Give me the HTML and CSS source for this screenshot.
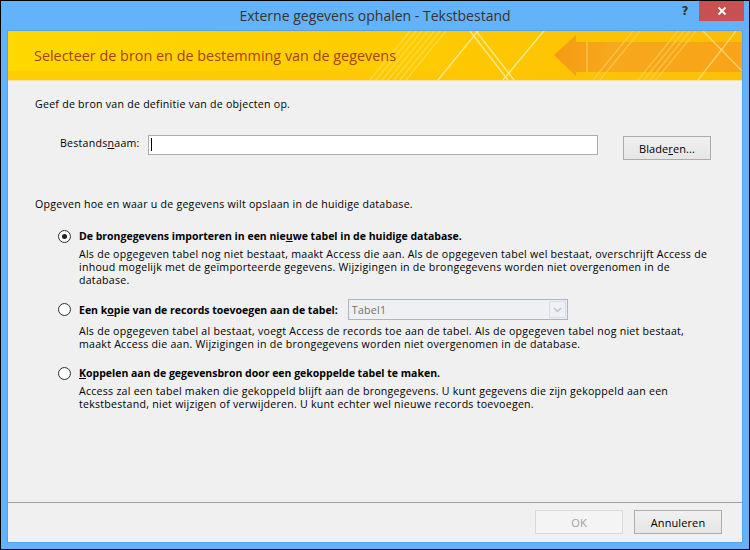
FILE: index.html
```html
<!DOCTYPE html>
<html lang="nl">
<head>
<meta charset="UTF-8" />
<title>Externe gegevens ophalen - Tekstbestand</title>
<link rel="stylesheet" href="styles.css">
</head>
<body>
<div class="window">
  <div class="titlebar">
    <span></span>
    <span class="title">Externe gegevens ophalen - Tekstbestand</span>
    <div class="caption-btns">
      <span class="help">?</span>
      <span class="close">
        <svg width="10" height="10" viewBox="0 0 10 10"><path d="M1.5 1.5 L8.5 8.5 M8.5 1.5 L1.5 8.5" stroke="#fff" stroke-width="1.8" /></svg>
      </span>
    </div>
  </div>

  <div class="client">
    <div class="banner">
      <svg class="banner-art" width="734" height="49" viewBox="0 0 734 49">
        <defs>
          <linearGradient id="bg" x1="0" y1="0" x2="1" y2="0">
            <stop offset="0" stop-color="#ffd800" />
            <stop offset="0.55" stop-color="#fecb00" />
            <stop offset="1" stop-color="#fbbc08" />
          </linearGradient>
          <linearGradient id="arrow" x1="0" y1="0" x2="1" y2="0">
            <stop offset="0" stop-color="#f59a12" />
            <stop offset="0.3" stop-color="#f7a81c" />
            <stop offset="1" stop-color="#f8a416" />
          </linearGradient>
        </defs>
        <rect width="734" height="49" fill="url(#bg)" />
        <rect y="40" width="734" height="9" fill="#fdc406" opacity="0.5" />
        <g stroke="#ffe97a" stroke-width="1.2" opacity="0.55">
          <line x1="362" y1="49" x2="402" y2="0" />
          <line x1="368" y1="49" x2="408" y2="0" />
          <line x1="374" y1="49" x2="414" y2="0" />
          <line x1="380" y1="49" x2="420" y2="0" />
          <line x1="386" y1="49" x2="426" y2="0" />
          <line x1="392" y1="49" x2="432" y2="0" />
          <line x1="398" y1="49" x2="438" y2="0" />
        </g>
        <g stroke="#fff3b0" stroke-width="1.5" opacity="0.75">
          <line x1="462" y1="0" x2="500" y2="49" />
          <line x1="468" y1="0" x2="506" y2="49" />
          <line x1="495" y1="49" x2="540" y2="-5" />
          <line x1="430" y1="49" x2="470" y2="0" />
        </g>
        <polygon points="546,24 568,4 568,11 734,11 734,41 568,41 568,45" fill="url(#arrow)" />
        <rect x="578" y="11" width="2" height="30" fill="#fbc24a" opacity="0.8" />
        <g stroke="#ffd45a" stroke-width="1.2" opacity="0.7">
          <line x1="585" y1="49" x2="625" y2="0" />
          <line x1="592" y1="49" x2="632" y2="0" />
          <line x1="630" y1="49" x2="670" y2="0" />
          <line x1="636" y1="49" x2="676" y2="0" />
          <line x1="642" y1="49" x2="682" y2="0" />
          <line x1="648" y1="49" x2="688" y2="0" />
        </g>
        <g stroke="#fff0a0" stroke-width="1.4" opacity="0.6">
          <line x1="695" y1="0" x2="734" y2="40" />
          <line x1="690" y1="49" x2="728" y2="0" />
        </g>
      </svg>
      <h1 class="banner-title">Selecteer de bron en de bestemming van de gegevens</h1>
    </div>

    <div class="content">
      <p class="intro">Geef de bron van de definitie van de objecten op.</p>

      <div class="file-row">
        <label class="file-label">Bestands<u>n</u>aam:</label>
        <div class="textbox"><span class="caret"></span></div>
        <button class="btn browse">Blade<u>r</u>en...</button>
      </div>

      <p class="intro intro-store">Opgeven hoe en waar u de gegevens wilt opslaan in de huidige database.</p>

      <div class="options">
        <div class="option">
          <div class="option-head">
            <span class="radio checked"></span>
            <span class="option-label">De brongegevens importeren in een nie<u>u</u>we tabel in de huidige database.</span>
          </div>
          <p class="option-desc">Als de opgegeven tabel nog niet bestaat, maakt Access die aan. Als de opgegeven tabel wel bestaat, overschrijft Access de<br>inhoud mogelijk met de geïmporteerde gegevens. Wijzigingen in de brongegevens worden niet overgenomen in de<br>database.</p>
        </div>

        <div class="option option-combo">
          <div class="option-head">
            <span class="radio"></span>
            <span class="option-label">Een k<u>o</u>pie van de records toevoegen aan de tabel:</span>
            <div class="combo">
              <span class="combo-text">Tabel1</span>
              <span class="combo-drop">
                <svg width="9" height="6" viewBox="0 0 9 6"><path d="M1 1 L4.5 4.5 L8 1" fill="none" stroke="#b9c0c8" stroke-width="1.3" /></svg>
              </span>
            </div>
          </div>
          <p class="option-desc">Als de opgegeven tabel al bestaat, voegt Access de records toe aan de tabel. Als de opgegeven tabel nog niet bestaat,<br>maakt Access die aan. Wijzigingen in de brongegevens worden niet overgenomen in de database.</p>
        </div>

        <div class="option">
          <div class="option-head">
            <span class="radio"></span>
            <span class="option-label"><u>K</u>oppelen aan de gegevensbron door een gekoppelde tabel te maken.</span>
          </div>
          <p class="option-desc">Access zal een tabel maken die gekoppeld blijft aan de brongegevens. U kunt gegevens die zijn gekoppeld aan een<br>tekstbestand, niet wijzigen of verwijderen. U kunt echter wel nieuwe records toevoegen.</p>
        </div>
      </div>
    </div>

    <div class="footer">
      <button class="btn" disabled>OK</button>
      <button class="btn">Annuleren</button>
    </div>
  </div>
</div>
</body>
</html>
```

FILE: styles.css
```css
* {
box-sizing: border-box;
}

body {
margin: 0;
font-family: "Open Sans", sans-serif;
font-size: 10.6px;
letter-spacing: 0.25px;
color: #000;
}

.window {
width: 750px;
height: 550px;
border: 1px solid #000;
background: #64b3fa;
display: flex;
flex-direction: column;
padding: 0 6px 6px 6px;
}

.titlebar {
height: 29px;
margin: 0 -6px;
display: grid;
grid-template-columns: 1fr auto 1fr;
align-items: start;
letter-spacing: 0;
}

.title {
font-size: 14px;
color: #333;
line-height: 29px;
}

.caption-btns {
justify-self: end;
display: flex;
margin-right: 5px;
}

.help {
width: 28px;
height: 20px;
line-height: 20px;
text-align: center;
font-family: "DejaVu Sans", sans-serif;
font-weight: bold;
font-size: 12px;
color: #333;
}

.close {
width: 45px;
height: 20px;
background: #c75050;
display: flex;
align-items: center;
justify-content: center;
}

.client {
flex: 1;
display: flex;
flex-direction: column;
background: #f0f0f0;
border: 1px solid #5aa2e6;
}

.banner {
position: relative;
height: 50px;
border-bottom: 1px solid #f3e3a0;
display: flex;
align-items: center;
overflow: hidden;
}

.banner-art {
position: absolute;
left: 0;
top: 0;
}

.banner-title {
position: relative;
margin: 0 0 0 26px;
font-size: 14.4px;
font-weight: normal;
letter-spacing: 0;
color: #a8420f;
}

.content {
flex: 1;
padding-left: 27px;
}

.intro {
margin: 16px 0 0 0;
line-height: 14px;
}

.file-row {
display: flex;
align-items: flex-start;
margin-top: 24px;
padding-left: 25px;
}

.file-label {
width: 88px;
line-height: 16px;
}

.textbox {
width: 450px;
height: 20px;
background: #fff;
border: 1px solid #abadb3;
padding: 2px 0 0 2px;
}

.caret {
display: block;
width: 1px;
height: 13px;
background: #000;
}

.btn {
width: 88px;
height: 24px;
font-family: inherit;
font-size: 11px;
letter-spacing: 0.1px;
color: #000;
background: linear-gradient(#f0f0f0, #e5e5e5);
border: 1px solid #acacac;
border-radius: 0;
padding: 0;
}

.btn:disabled {
background: #f4f4f4;
border-color: #d9d9d9;
color: #a0a0a0;
}

.browse {
margin: 1px 0 0 25px;
}

.intro-store {
margin-top: 37px;
}

.options {
margin-top: 15px;
padding-left: 23px;
}

.option + .option {
margin-top: 12px;
}

.option-head {
display: flex;
align-items: center;
min-height: 20px;
}

.radio {
width: 13px;
height: 13px;
border: 1px solid #333;
border-radius: 50%;
background: radial-gradient(circle, #fff 55%, #e8e8e8);
margin-right: 8px;
display: flex;
align-items: center;
justify-content: center;
}

.radio.checked::after {
content: "";
width: 5px;
height: 5px;
border-radius: 50%;
background: #222;
}

.option-label {
font-weight: bold;
font-size: 10.5px;
letter-spacing: 0;
}

.option-desc {
margin: 2px 0 0 21px;
line-height: 13px;
white-space: nowrap;
}

.option-combo .option-desc {
margin-top: 5px;
}

.combo {
width: 220px;
height: 21px;
margin-left: 10px;
border: 1px solid #a9b5c5;
background: #eef0f3;
display: flex;
align-items: center;
justify-content: space-between;
padding: 0 1px 0 3px;
}

.combo-text {
color: #707070;
}

.combo-drop {
width: 17px;
height: 17px;
border: 1px solid #d5dce4;
display: flex;
align-items: center;
justify-content: center;
}

.footer {
border-top: 1px solid #a0a0a0;
display: flex;
justify-content: flex-end;
gap: 11px;
padding: 7px 20px 8px 0;
}
```
